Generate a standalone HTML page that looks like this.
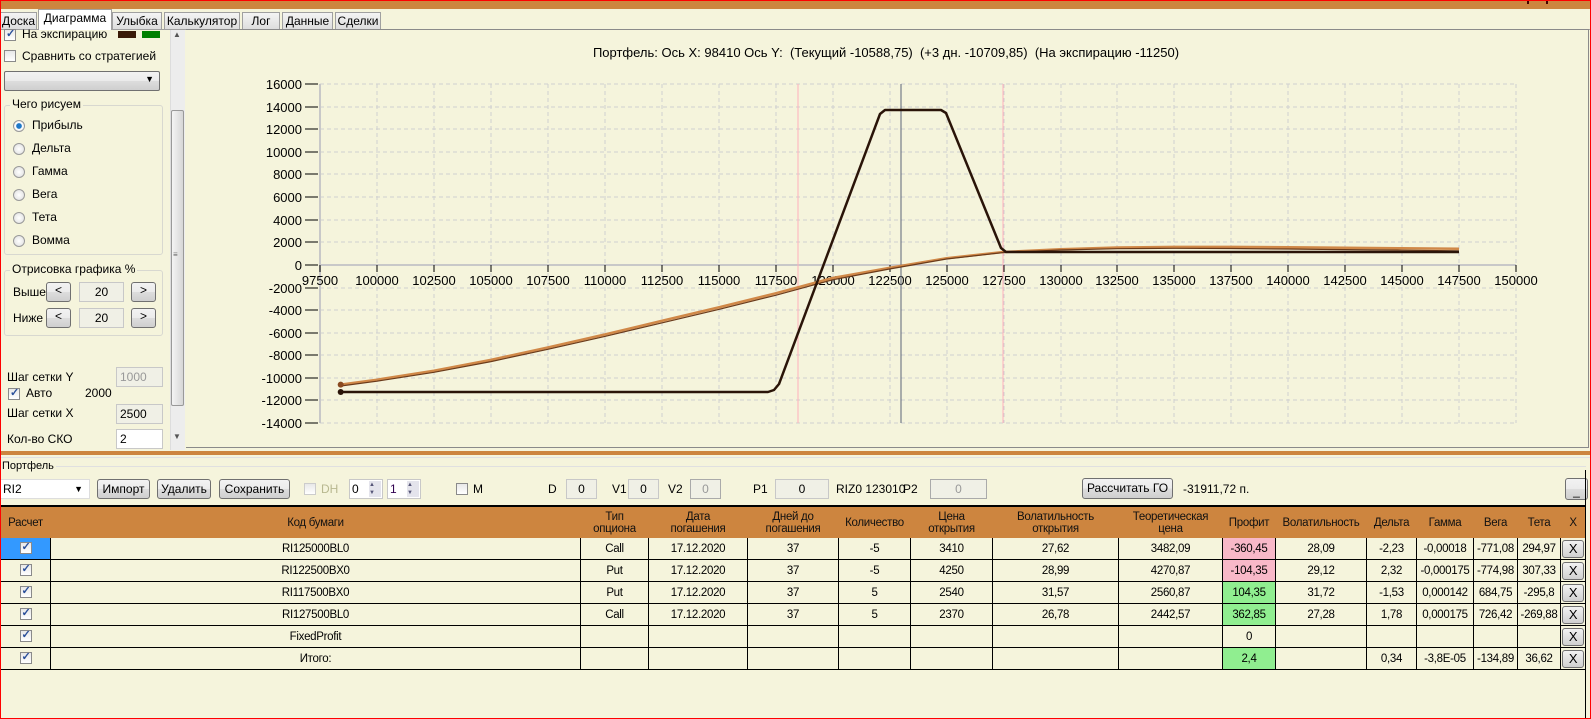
<!DOCTYPE html>
<html><head><meta charset="utf-8"><style>
*{box-sizing:border-box;margin:0;padding:0}
body{width:1591px;height:719px;position:relative;overflow:hidden;background:#f5f4dc;font-family:"Liberation Sans",sans-serif;font-size:12px;color:#000}
.a{position:absolute;white-space:nowrap}
.frame{position:absolute;left:0;top:0;width:1591px;height:719px;border:1px solid #f00;pointer-events:none;z-index:9}
.tab{position:absolute;top:12px;height:18px;border:1px solid #a0a0a0;border-bottom:none;background:linear-gradient(#f4f4f4,#dcdcdc);font-size:12px;text-align:center;line-height:16px}
.cb{position:absolute;width:12px;height:12px;border:1px solid #8a8a8a;background:linear-gradient(#e8e8e8,#fff)}
.cbk::after{content:"✓";position:absolute;left:1px;top:-3px;font-size:11px;color:#2a4f9a;font-weight:bold}
.rd{position:absolute;width:12px;height:12px;border-radius:50%;border:1px solid #999;background:radial-gradient(#fff,#ddd)}
.btn{position:absolute;border:1px solid #707070;border-radius:3px;background:linear-gradient(#f2f2f2,#ebebeb 50%,#dddddd 51%,#cfcfcf);text-align:center;font-size:12px}
.fld{position:absolute;border:1px solid #c8c8c8;background:#f0f0e6;text-align:center;font-size:12px}
.grp{position:absolute;border:1px solid #d8d8d0;border-radius:3px}
.grpl{position:absolute;background:#f5f4dc;padding:0 2px;font-size:12px}
table{position:absolute;left:0;top:507px;border-collapse:collapse;font-size:11.5px;letter-spacing:-0.3px}
td,th{border:1px solid #000;text-align:center;height:22px;padding:0;font-weight:normal}
th{background:#cd853f;border-color:#cd853f;border-left:1px solid #eee;height:30px;line-height:12px;color:#111}
tr.h{border-top:2px solid #000}
.pk{background:#f8b8c8}.gr{background:#90ee90}
.xb{display:inline-block;width:22px;height:18px;border:1px solid #707070;border-radius:3px;background:linear-gradient(#f2f2f2,#d0d0d0);line-height:16px;font-size:13px}
</style></head><body>
<div class="a" style="left:0;top:0;width:1591px;height:9px;background:#cd853f"></div>
<div class="a" style="left:1527px;top:0;width:2px;height:4px;background:#400"></div>
<div class="a" style="left:1546px;top:0;width:2px;height:4px;background:#400"></div>
<!-- tabs -->
<div class="tab" style="left:0;width:37px">Доска</div>
<div class="tab" style="left:38px;width:74px;top:9px;height:21px;background:#fff;z-index:2">Диаграмма</div>
<div class="tab" style="left:112px;width:50px">Улыбка</div>
<div class="tab" style="left:164px;width:76px">Калькулятор</div>
<div class="tab" style="left:242px;width:38px">Лог</div>
<div class="tab" style="left:282px;width:51px">Данные</div>
<div class="tab" style="left:335px;width:46px">Сделки</div>
<div class="a" style="left:0;top:29px;width:1591px;height:1px;background:#a0a0a0"></div>
<!-- left panel -->
<div class="cb cbk" style="left:4px;top:29px"></div><div class="a" style="left:22px;top:27px">На экспирацию</div>
<div class="a" style="left:118px;top:31px;width:18px;height:7px;background:#3a1a08"></div>
<div class="a" style="left:142px;top:31px;width:18px;height:7px;background:#008000"></div>
<div class="cb" style="left:4px;top:50px"></div><div class="a" style="left:22px;top:49px">Сравнить со стратегией</div>
<div class="btn" style="left:4px;top:71px;width:156px;height:20px;border-radius:2px"><span style="position:absolute;right:5px;top:2px;font-size:9px">▼</span></div>
<div class="grp" style="left:4px;top:105px;width:159px;height:150px"></div>
<div class="grpl" style="left:10px;top:97px">Чего рисуем</div>
<div class="rd" style="left:13px;top:120px;background:radial-gradient(#1e78c8 35%,#fff 45%,#ddd)"></div><div class="a" style="left:32px;top:118px">Прибыль</div>
<div class="rd" style="left:13px;top:143px"></div><div class="a" style="left:32px;top:141px">Дельта</div>
<div class="rd" style="left:13px;top:166px"></div><div class="a" style="left:32px;top:164px">Гамма</div>
<div class="rd" style="left:13px;top:189px"></div><div class="a" style="left:32px;top:187px">Вега</div>
<div class="rd" style="left:13px;top:212px"></div><div class="a" style="left:32px;top:210px">Тета</div>
<div class="rd" style="left:13px;top:235px"></div><div class="a" style="left:32px;top:233px">Вомма</div>
<div class="grp" style="left:4px;top:270px;width:159px;height:66px"></div>
<div class="grpl" style="left:10px;top:262px">Отрисовка графика %</div>
<div class="a" style="left:13px;top:285px">Выше</div>
<div class="btn" style="left:46px;top:282px;width:25px;height:20px">&lt;</div>
<div class="fld" style="left:79px;top:282px;width:45px;height:20px;line-height:18px">20</div>
<div class="btn" style="left:131px;top:282px;width:25px;height:20px">&gt;</div>
<div class="a" style="left:13px;top:311px">Ниже</div>
<div class="btn" style="left:46px;top:308px;width:25px;height:20px">&lt;</div>
<div class="fld" style="left:79px;top:308px;width:45px;height:20px;line-height:18px">20</div>
<div class="btn" style="left:131px;top:308px;width:25px;height:20px">&gt;</div>
<div class="a" style="left:7px;top:370px">Шаг сетки Y</div>
<div class="fld" style="left:116px;top:367px;width:47px;height:20px;line-height:18px;text-align:left;padding-left:3px;color:#999">1000</div>
<div class="cb cbk" style="left:8px;top:388px"></div><div class="a" style="left:26px;top:386px">Авто</div><div class="a" style="left:85px;top:386px">2000</div>
<div class="a" style="left:7px;top:406px">Шаг сетки X</div>
<div class="fld" style="left:116px;top:404px;width:47px;height:20px;line-height:18px;text-align:left;padding-left:3px">2500</div>
<div class="a" style="left:7px;top:432px">Кол-во СКО</div>
<div class="fld" style="left:116px;top:429px;width:47px;height:20px;line-height:18px;text-align:left;padding-left:3px;background:#fff">2</div>
<div class="a" style="left:170px;top:30px;width:15px;height:420px;background:#ededed;border-left:1px solid #ddd"></div>
<div class="a" style="left:171px;top:110px;width:13px;height:296px;background:linear-gradient(90deg,#f4f4f4,#d6d6d6);border:1px solid #999;border-radius:2px"></div>
<div class="a" style="left:173px;top:30px;font-size:8px;color:#555">▲</div>
<div class="a" style="left:173px;top:432px;font-size:8px;color:#555">▼</div>
<div class="a" style="left:173px;top:250px;font-size:8px;color:#666">≡</div>
<!-- chart panel -->
<div class="a" style="left:186px;top:29px;width:1403px;height:419px;border:1px solid #8a8a8a;border-left:none"></div>
<svg class="a" style="left:0;top:0" width="1591" height="460" font-family="Liberation Sans, sans-serif">
<g stroke="#d0d0d0" stroke-dasharray="4,3" stroke-width="1">
<path d="M377 84V423M434 84V423M491 84V423M548 84V423M605 84V423M662 84V423M719 84V423M776 84V423M833 84V423M890 84V423M947 84V423M1004 84V423M1061 84V423M1117 84V423M1174 84V423M1231 84V423M1288 84V423M1345 84V423M1402 84V423M1459 84V423M1516 84V423"/>
<path d="M320 84H1516M320 107H1516M320 129H1516M320 152H1516M320 174H1516M320 197H1516M320 220H1516M320 242H1516M320 288H1516M320 310H1516M320 333H1516M320 355H1516M320 378H1516M320 400H1516M320 423H1516"/>
</g>
<path d="M320 84V423" stroke="#c8c8c8" stroke-width="2"/>
<path d="M320 265H1516" stroke="#c8c8c8" stroke-width="2"/>
<g stroke="#000" stroke-width="1"><path d="M305 84H318M305 107H318M305 129H318M305 152H318M305 174H318M305 197H318M305 220H318M305 242H318M305 265H318M305 288H318M305 310H318M305 333H318M305 355H318M305 378H318M305 400H318M305 423H318"/>
<path d="M320 265V272M377 265V272M434 265V272M491 265V272M548 265V272M605 265V272M662 265V272M719 265V272M776 265V272M833 265V272M890 265V272M947 265V272M1004 265V272M1061 265V272M1117 265V272M1174 265V272M1231 265V272M1288 265V272M1345 265V272M1402 265V272M1459 265V272M1516 265V272"/></g>
<g font-size="13" text-anchor="end" fill="#000">
<text x="302" y="89">16000</text><text x="302" y="112">14000</text><text x="302" y="134">12000</text><text x="302" y="157">10000</text><text x="302" y="179">8000</text><text x="302" y="202">6000</text><text x="302" y="225">4000</text><text x="302" y="247">2000</text><text x="302" y="270">0</text><text x="302" y="293">-2000</text><text x="302" y="315">-4000</text><text x="302" y="338">-6000</text><text x="302" y="360">-8000</text><text x="302" y="383">-10000</text><text x="302" y="405">-12000</text><text x="302" y="428">-14000</text>
</g>
<g font-size="13" text-anchor="middle" fill="#000">
<text x="320" y="285">97500</text><text x="377" y="285">100000</text><text x="434" y="285">102500</text><text x="491" y="285">105000</text><text x="548" y="285">107500</text><text x="605" y="285">110000</text><text x="662" y="285">112500</text><text x="719" y="285">115000</text><text x="776" y="285">117500</text><text x="833" y="285">120000</text><text x="890" y="285">122500</text><text x="947" y="285">125000</text><text x="1004" y="285">127500</text><text x="1061" y="285">130000</text><text x="1117" y="285">132500</text><text x="1174" y="285">135000</text><text x="1231" y="285">137500</text><text x="1288" y="285">140000</text><text x="1345" y="285">142500</text><text x="1402" y="285">145000</text><text x="1459" y="285">147500</text><text x="1516" y="285">150000</text>
</g>
<path d="M798 84V423M1003 84V423" stroke="#ffb0bc" stroke-width="1"/>
<path d="M901 84V423" stroke="#5a6478" stroke-width="1"/>
<polyline fill="none" stroke="#d08848" stroke-width="2.5" points="340.7,384.6 377,379.7 433.9,370.7 490.9,359.9 547.8,347.5 604.8,334.5 661.7,320.9 718.7,307.4 775.6,293.3 832.6,278 889.5,267.8 946.5,258.2 1003.4,252 1060.4,249.2 1117.3,247.5 1174.3,246.9 1231.2,246.9 1288.2,247.3 1345.1,247.7 1402.1,248.3 1459,248.8"/>
<polyline fill="none" stroke="#6a3a1a" stroke-width="1.2" points="340.7,386 377,381.2 433.9,372.3 490.9,361.6 547.8,349.3 604.8,336.4 661.7,322.9 718.7,309.4 775.6,295.3 832.6,279.8 889.5,269 946.5,259 1003.4,252.5 1060.4,250 1117.3,248.7 1174.3,248.3 1231.2,248.5 1288.2,249 1345.1,249.6 1402.1,250.2 1459,250.8"/>
<polyline fill="none" stroke="#2a1408" stroke-width="2.5" stroke-linejoin="round" points="340.7,392 768,392 774,390 779,384 880,114 885,110 941,110 946,113 1001,248 1006,252 1459,252"/>
<circle cx="340.7" cy="384.6" r="3" fill="#8a4a20"/><circle cx="340.7" cy="392" r="3" fill="#2a1408"/>
<text x="886" y="57" font-size="13" text-anchor="middle" fill="#000" xml:space="preserve">Портфель: Ось X: 98410 Ось Y:  (Текущий -10588,75)  (+3 дн. -10709,85)  (На экспирацию -11250)</text>
</svg>
<!-- separator -->
<div class="a" style="left:0;top:451px;width:1591px;height:4px;background:#cd853f"></div>
<div class="a" style="left:0;top:457px;width:1591px;height:1px;background:#e0e0e0"></div>
<div class="a" style="left:2px;top:460px;font-size:11px">Портфель</div>
<div class="a" style="left:56px;top:466px;width:1530px;height:1px;background:#e0e0e0"></div>
<!-- toolbar -->
<div class="a" style="left:0;top:479px;width:90px;height:20px;background:#fff;border:1px solid #ddd;line-height:18px;padding-left:2px">RI2<span style="position:absolute;right:6px;top:0;font-size:9px">▼</span></div>
<div class="btn" style="left:97px;top:479px;width:53px;height:20px;line-height:18px">Импорт</div>
<div class="btn" style="left:157px;top:479px;width:54px;height:20px;line-height:18px">Удалить</div>
<div class="btn" style="left:219px;top:479px;width:71px;height:20px;line-height:18px">Сохранить</div>
<div class="cb" style="left:304px;top:483px;border-color:#ccc"></div><div class="a" style="left:321px;top:482px;color:#b8b890">DH</div>
<div class="a" style="left:349px;top:479px;width:34px;height:20px;border:1px solid #c8c8c8;background:#fff;padding-left:2px;line-height:18px">0<span style="position:absolute;right:1px;top:1px;width:12px;height:16px;background:#e4e4ec;font-size:6px;line-height:8px;color:#557">▲<br>▼</span></div>
<div class="a" style="left:387px;top:479px;width:34px;height:20px;border:1px solid #c8c8c8;background:#fff;padding-left:2px;line-height:18px;color:#300050">1<span style="position:absolute;right:1px;top:1px;width:12px;height:16px;background:#e4e4ec;font-size:6px;line-height:8px;color:#557">▲<br>▼</span></div>
<div class="cb" style="left:456px;top:483px"></div><div class="a" style="left:473px;top:482px">M</div>
<div class="a" style="left:548px;top:482px">D</div><div class="fld" style="left:566px;top:479px;width:31px;height:20px;line-height:18px">0</div>
<div class="a" style="left:612px;top:482px">V1</div><div class="fld" style="left:628px;top:479px;width:31px;height:20px;line-height:18px">0</div>
<div class="a" style="left:668px;top:482px">V2</div><div class="fld" style="left:690px;top:479px;width:31px;height:20px;line-height:18px;color:#999;border-color:#aaa">0</div>
<div class="a" style="left:753px;top:482px">P1</div><div class="fld" style="left:775px;top:479px;width:54px;height:20px;line-height:18px">0</div>
<div class="a" style="left:836px;top:482px">RIZ0 123010</div>
<div class="a" style="left:903px;top:482px">P2</div><div class="fld" style="left:930px;top:479px;width:57px;height:20px;line-height:18px;color:#999;border-color:#aaa">0</div>
<div class="btn" style="left:1082px;top:478px;width:91px;height:21px;line-height:19px">Рассчитать ГО</div>
<div class="a" style="left:1183px;top:482px">-31911,72 п.</div>
<div class="btn" style="left:1565px;top:478px;width:23px;height:22px;line-height:24px">_</div>
<div class="a" style="left:0;top:505px;width:1585px;height:2px;background:#000"></div>
<table>
<colgroup><col style="width:50px"><col style="width:530px"><col style="width:68px"><col style="width:99px"><col style="width:91px"><col style="width:72px"><col style="width:82px"><col style="width:126px"><col style="width:104px"><col style="width:53px"><col style="width:91px"><col style="width:50px"><col style="width:57px"><col style="width:44px"><col style="width:43px"><col style="width:25px"></colgroup>
<tr><th>Расчет</th><th>Код бумаги</th><th>Тип<br>опциона</th><th>Дата<br>погашения</th><th>Дней до<br>погашения</th><th>Количество</th><th>Цена<br>открытия</th><th>Волатильность<br>открытия</th><th>Теоретическая<br>цена</th><th>Профит</th><th>Волатильность</th><th>Дельта</th><th>Гамма</th><th>Вега</th><th>Тета</th><th>X</th></tr>
<tr><td style="background:#3399ff"><span class="cb cbk" style="position:relative;display:inline-block;vertical-align:middle"></span></td><td>RI125000BL0</td><td>Call</td><td>17.12.2020</td><td>37</td><td>-5</td><td>3410</td><td>27,62</td><td>3482,09</td><td class="pk">-360,45</td><td>28,09</td><td>-2,23</td><td>-0,00018</td><td>-771,08</td><td>294,97</td><td><span class="xb">X</span></td></tr>
<tr><td><span class="cb cbk" style="position:relative;display:inline-block;vertical-align:middle"></span></td><td>RI122500BX0</td><td>Put</td><td>17.12.2020</td><td>37</td><td>-5</td><td>4250</td><td>28,99</td><td>4270,87</td><td class="pk">-104,35</td><td>29,12</td><td>2,32</td><td>-0,000175</td><td>-774,98</td><td>307,33</td><td><span class="xb">X</span></td></tr>
<tr><td><span class="cb cbk" style="position:relative;display:inline-block;vertical-align:middle"></span></td><td>RI117500BX0</td><td>Put</td><td>17.12.2020</td><td>37</td><td>5</td><td>2540</td><td>31,57</td><td>2560,87</td><td class="gr">104,35</td><td>31,72</td><td>-1,53</td><td>0,000142</td><td>684,75</td><td>-295,8</td><td><span class="xb">X</span></td></tr>
<tr><td><span class="cb cbk" style="position:relative;display:inline-block;vertical-align:middle"></span></td><td>RI127500BL0</td><td>Call</td><td>17.12.2020</td><td>37</td><td>5</td><td>2370</td><td>26,78</td><td>2442,57</td><td class="gr">362,85</td><td>27,28</td><td>1,78</td><td>0,000175</td><td>726,42</td><td>-269,88</td><td><span class="xb">X</span></td></tr>
<tr><td><span class="cb cbk" style="position:relative;display:inline-block;vertical-align:middle"></span></td><td>FixedProfit</td><td></td><td></td><td></td><td></td><td></td><td></td><td></td><td>0</td><td></td><td></td><td></td><td></td><td></td><td><span class="xb">X</span></td></tr>
<tr><td><span class="cb cbk" style="position:relative;display:inline-block;vertical-align:middle"></span></td><td>Итого:</td><td></td><td></td><td></td><td></td><td></td><td></td><td></td><td class="gr">2,4</td><td></td><td>0,34</td><td>-3,8E-05</td><td>-134,89</td><td>36,62</td><td><span class="xb">X</span></td></tr>
</table>
<div class="a" style="left:1585px;top:470px;width:1px;height:249px;background:#000"></div>
<div class="frame"></div>
</body></html>
